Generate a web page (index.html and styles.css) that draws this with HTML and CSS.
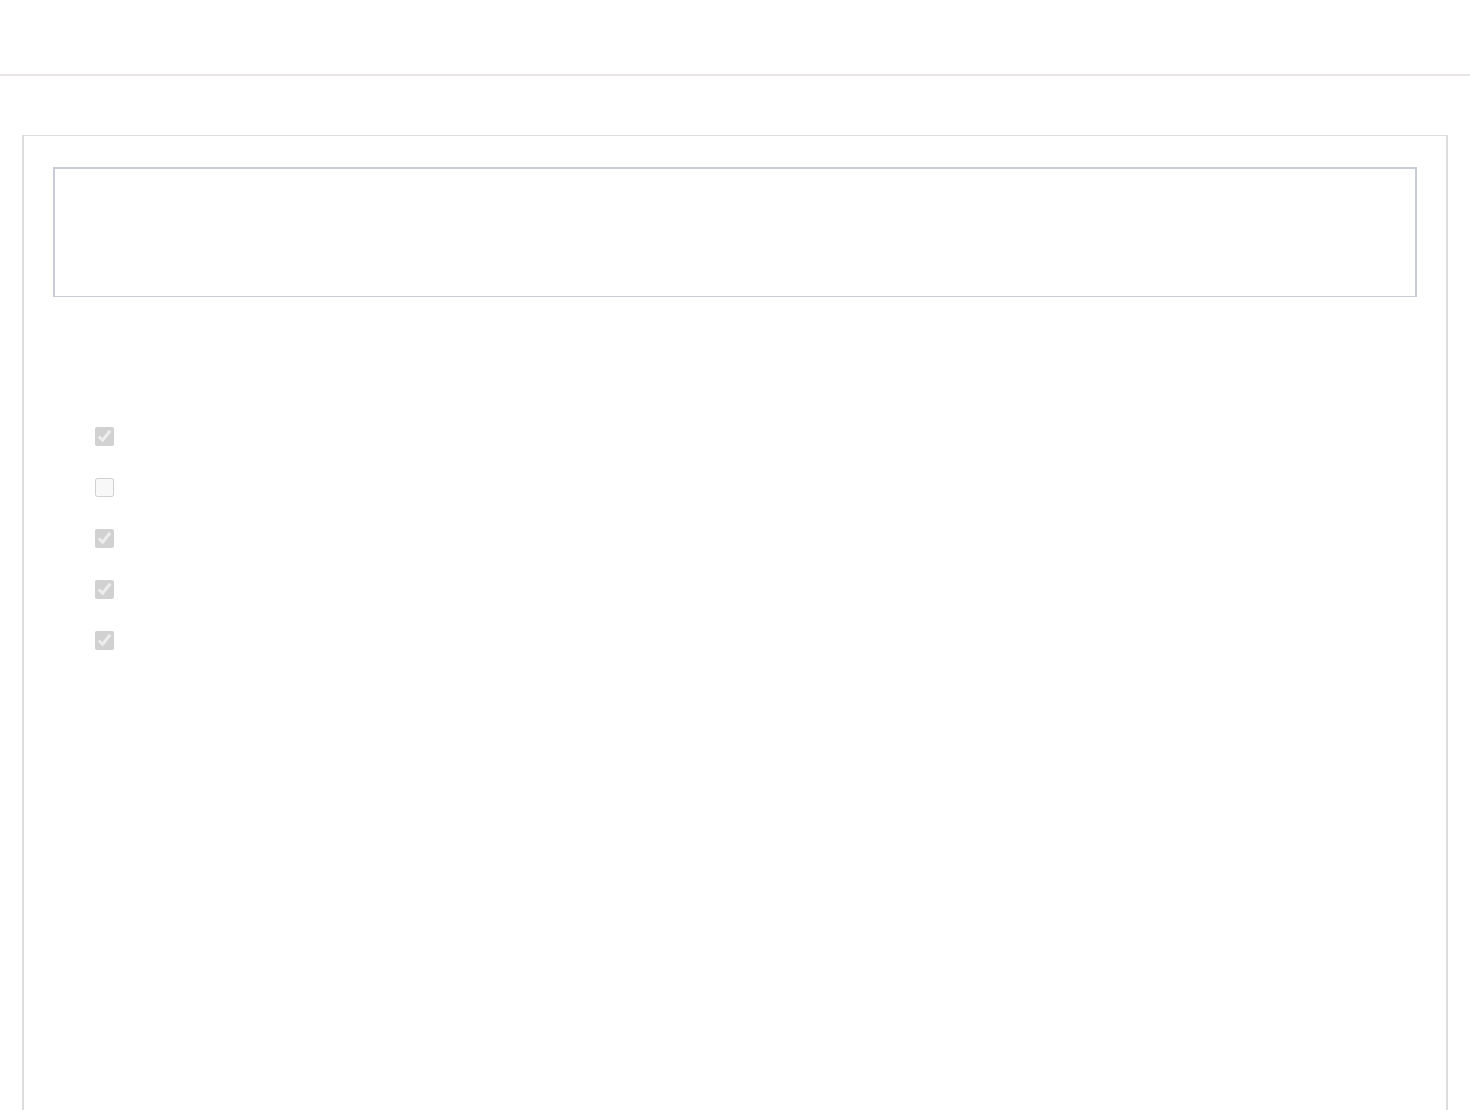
FILE: index.html
```html
<!DOCTYPE html>
<html lang="en">
<head>
<meta charset="utf-8">
<title>Page</title>
<link rel="stylesheet" href="styles.css">
</head>
<body>
<header class="topbar"></header>
<main class="panel">
  <section class="banner"></section>
  <ul class="checks">
    <li class="check-row"><input class="check" type="checkbox" checked disabled></li>
    <li class="check-row"><input class="check" type="checkbox" disabled></li>
    <li class="check-row"><input class="check" type="checkbox" checked disabled></li>
    <li class="check-row"><input class="check" type="checkbox" checked disabled></li>
    <li class="check-row"><input class="check" type="checkbox" checked disabled></li>
  </ul>
</main>
</body>
</html>
```
FILE: styles.css
```css
html, body {
  margin: 0;
  padding: 0;
  background: #fff;
  font-family: "Liberation Sans", Arial, sans-serif;
  height: 100%;
  overflow: hidden;
}
.topbar {
  height: 74px;
  border-bottom: 2px solid #e8e4e6;
}
.panel {
  margin: 59px 22px 0 22px;
  border: 2px solid #dddddd;
  border-top-width: 1px;
  border-bottom: none;
  padding: 31px 29px 0 29px;
  min-height: 1000px;
}
.banner {
  height: 127px;
  border: 1px solid #c8ccd6;
  border-width: 2px 2px 1px 2px;
}
.checks {
  list-style: none;
  margin: 130px 0 0 0;
  padding: 0 0 0 42px;
  display: flex;
  flex-direction: column;
  gap: 32px;
}
.check-row {
  height: 19px;
  display: flex;
  align-items: center;
}
.check {
  width: 19px;
  height: 19px;
  margin: 0;
}
```
